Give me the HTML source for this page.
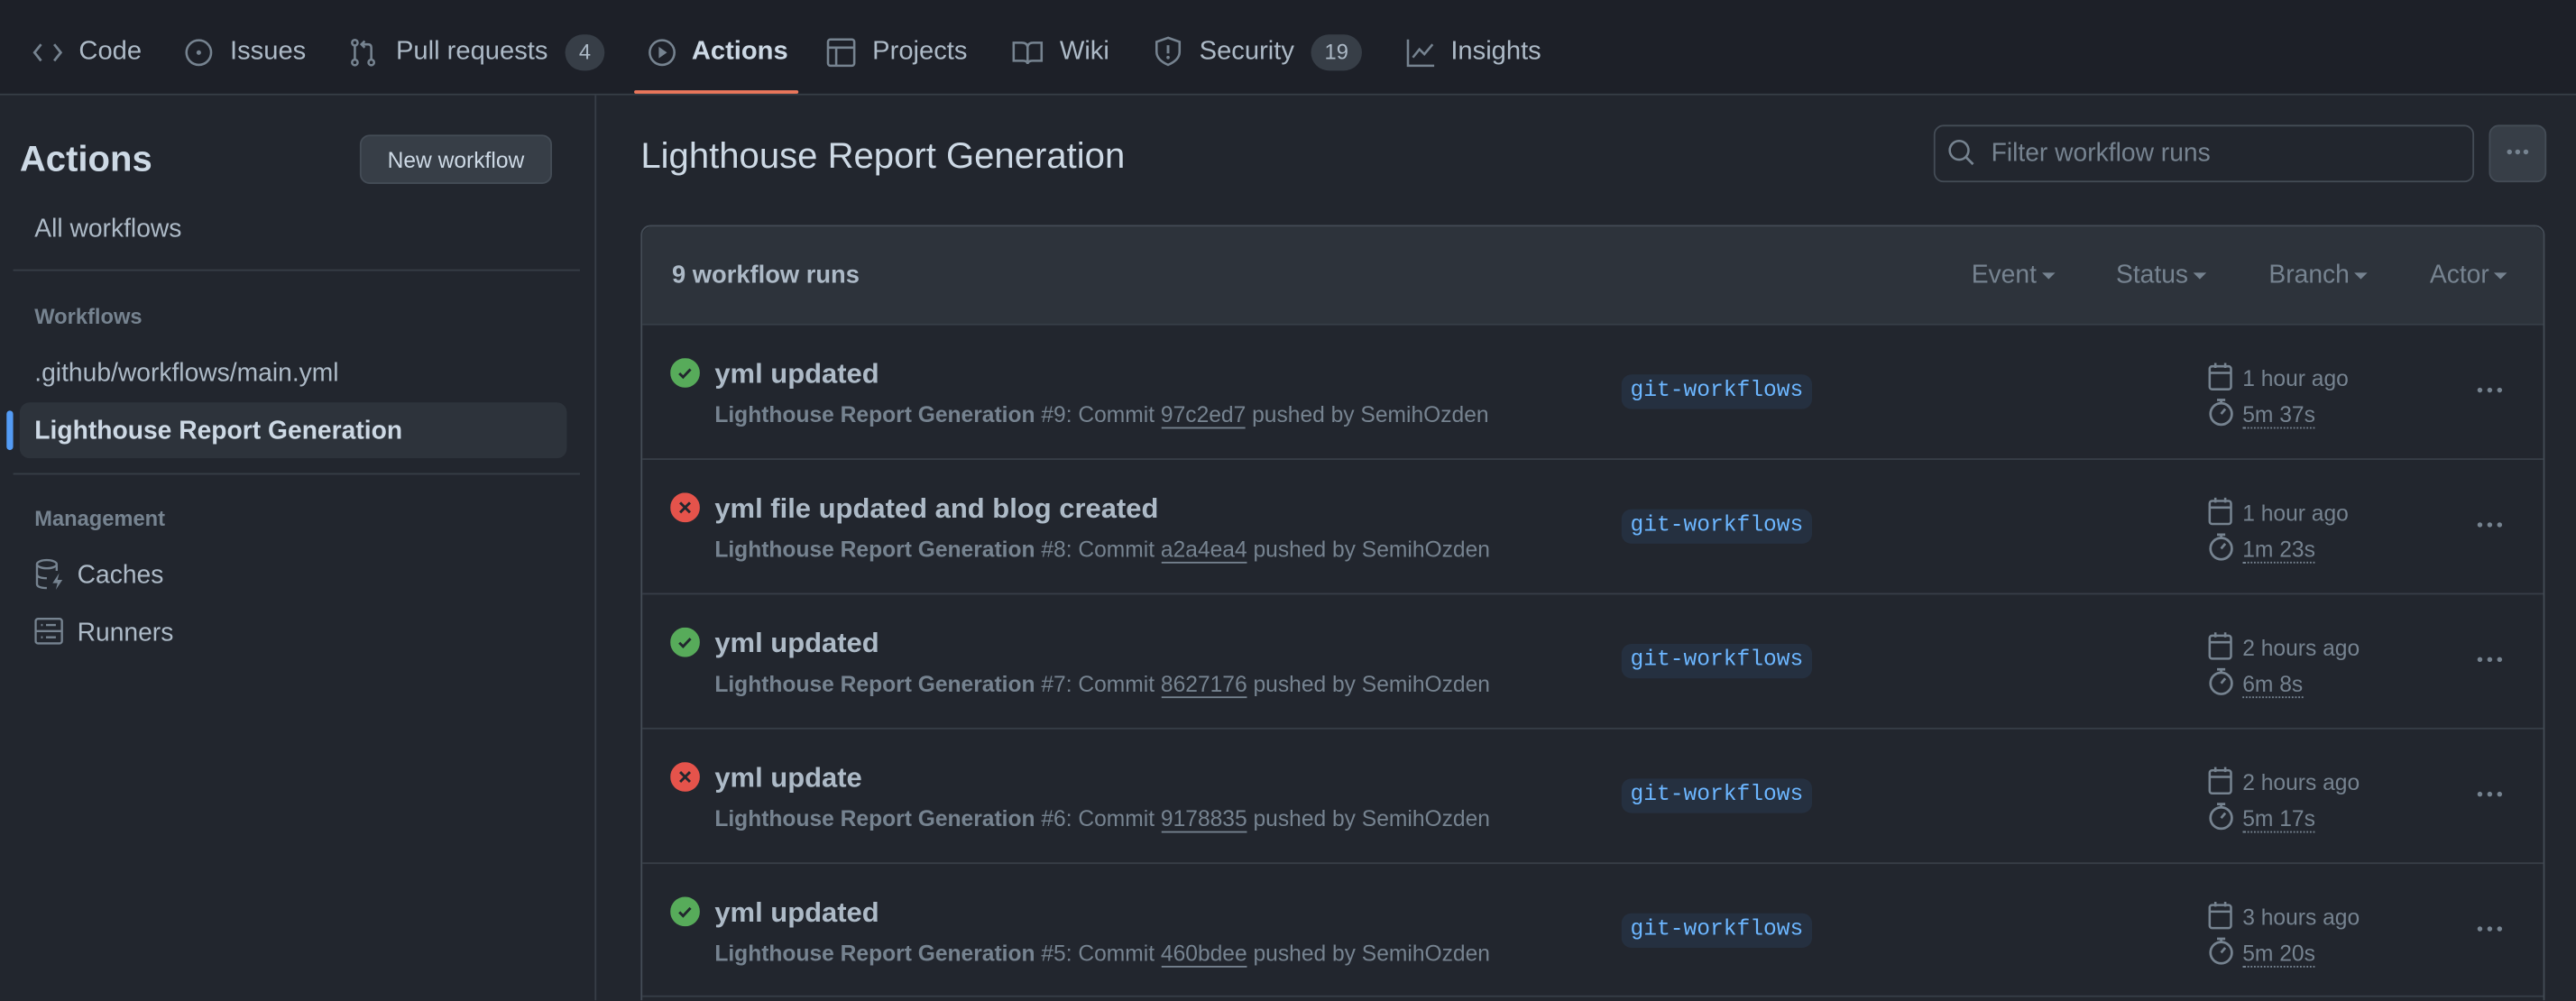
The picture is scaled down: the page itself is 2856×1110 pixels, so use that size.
<!DOCTYPE html>
<html><head><meta charset="utf-8"><style>
html,body{margin:0;padding:0;background:#22262e;overflow:hidden;width:2856px;height:1110px}
#w{position:absolute;left:0;top:0;width:1568px;height:609px;overflow:hidden;transform:scale(1.82143);transform-origin:0 0;font-family:"Liberation Sans",sans-serif;color:#adbac7;background:#22262e}
.a{position:absolute;white-space:nowrap}
svg{position:absolute}
.nav{position:absolute;left:0;top:0;width:1568px;height:57px;background:#1d2028;border-bottom:1px solid #373e47}
.nt{font-size:16px;top:23px;color:#adbac7}
.cnt{position:absolute;top:21px;height:22px;border-radius:11px;background:#373e47;font-size:13px;text-align:center;line-height:22px;color:#adbac7}
.row{position:absolute;left:391px;width:1157px;height:81px;border-top:1px solid #373e47}
.t{font-size:17px;font-weight:bold;color:#adbac7}
.s{font-size:13.5px;color:#768390}
.tag{position:absolute;left:596px;top:30px;width:116px;height:21px;border-radius:6px;background:#253040;color:#6cb6ff;font-family:"Liberation Mono","DejaVu Sans Mono",monospace;font-size:13.5px;line-height:21px;text-align:center}
.u{border-bottom:1px solid #768390}
.d{border-bottom:1px dotted #768390}
.car{display:inline-block;width:0;height:0;border-left:4px solid transparent;border-right:4px solid transparent;border-top:4px solid #768390;vertical-align:middle;margin-left:3px}
.keb{position:absolute;left:1117px;top:38px}
.keb i{position:absolute;top:0;width:3px;height:3px;border-radius:50%;background:#768390}
</style></head><body><div id="w">
<div class="nav"></div>
<svg style="left:20px;top:24px" width="18" height="16"><path d="M5 3L1 8l4 5M13 3l4 5-4 5" stroke="#768390" fill="none" stroke-width="1.5"/></svg>
<div class="a nt" style="left:48px">Code</div>
<svg style="left:112px;top:23px" width="18" height="18"><circle cx="9" cy="9" r="7.5" stroke="#768390" fill="none" stroke-width="1.4"/><circle cx="9" cy="9" r="1.4" fill="#768390"/></svg>
<div class="a nt" style="left:140px">Issues</div>
<svg style="left:212px;top:23px" width="18" height="18"><g stroke="#768390" fill="none" stroke-width="1.4"><circle cx="4" cy="3" r="1.7"/><circle cx="4" cy="15" r="1.7"/><circle cx="14" cy="15" r="1.7"/><path d="M4 5v8M14 13V6q0-2-2-2H8M10 2L8 4l2 2"/></g></svg>
<div class="a nt" style="left:241px">Pull requests</div>
<div class="cnt" style="left:344px;width:24px">4</div>
<svg style="left:394px;top:23px" width="18" height="18"><circle cx="9" cy="9" r="7.5" stroke="#768390" fill="none" stroke-width="1.4"/><path d="M7 5.5v7l5-3.5z" fill="#768390"/></svg>
<div class="a nt" style="left:421px;font-weight:bold;color:#cdd9e5">Actions</div>
<div class="a" style="left:386px;top:55px;width:100px;height:2px;background:#ec775c;border-radius:1px"></div>
<svg style="left:503px;top:23px" width="18" height="18"><g stroke="#768390" fill="none" stroke-width="1.4"><rect x="1" y="1" width="16" height="16" rx="1.5"/><path d="M1 6h16M6 6v11"/></g></svg>
<div class="a nt" style="left:531px">Projects</div>
<svg style="left:616px;top:24px" width="19" height="16"><path d="M1 2h5q3 0 3.5 2.5Q10 2 13 2h5v11h-5.5q-3 0-3 2q0-2-3-2H1z M9.5 4.5V14" stroke="#768390" fill="none" stroke-width="1.4"/></svg>
<div class="a nt" style="left:645px">Wiki</div>
<svg style="left:702px;top:22px" width="18" height="19"><path d="M9 1L2 3.5v6q0 5 7 8q7-3 7-8v-6z" stroke="#768390" fill="none" stroke-width="1.4"/><path d="M9 5.5v5" stroke="#768390" stroke-width="1.6"/><circle cx="9" cy="13" r="1" fill="#768390"/></svg>
<div class="a nt" style="left:730px">Security</div>
<div class="cnt" style="left:798px;width:31px">19</div>
<svg style="left:856px;top:23px" width="18" height="18"><path d="M1 1v16h16M4 12l4-5 3 3 5-6" stroke="#768390" fill="none" stroke-width="1.4"/></svg>
<div class="a nt" style="left:883px">Insights</div>

<div class="a" style="left:362px;top:58px;width:1px;height:560px;background:#373e47"></div>
<div class="a" style="left:12px;top:84px;font-size:22px;font-weight:bold;color:#cdd9e5">Actions</div>
<div class="a" style="left:219px;top:82px;width:115px;height:28px;border:1px solid #444c56;border-radius:6px;background:#373e47;font-size:13.5px;text-align:center;line-height:29px;color:#cdd9e5">New workflow</div>
<div class="a" style="left:21px;top:131px;font-size:15.5px">All workflows</div>
<div class="a" style="left:8px;top:164px;width:345px;height:1px;background:#373e47"></div>
<div class="a" style="left:21px;top:185px;font-size:13px;font-weight:bold;color:#768390">Workflows</div>
<div class="a" style="left:21px;top:219px;font-size:15.5px">.github/workflows/main.yml</div>
<div class="a" style="left:12px;top:245px;width:333px;height:34px;background:#2d333b;border-radius:6px"></div>
<div class="a" style="left:4px;top:250px;width:4px;height:24px;background:#539bf5;border-radius:2px"></div>
<div class="a" style="left:21px;top:254px;font-size:15.5px;font-weight:bold;color:#cdd9e5">Lighthouse Report Generation</div>
<div class="a" style="left:8px;top:288px;width:345px;height:1px;background:#373e47"></div>
<div class="a" style="left:21px;top:308px;font-size:13px;font-weight:bold;color:#768390">Management</div>
<svg style="left:21px;top:340px" width="20" height="20"><g stroke="#768390" fill="none" stroke-width="1.3"><ellipse cx="7.5" cy="3.5" rx="6" ry="2.5"/><path d="M1.5 3.5v12q0 2.5 6 2.5M1.5 9.5q0 2.5 6 2.5M13.5 3.5v4"/></g><path d="M15 9l-4 6h3l-1 4 4-6h-3z" fill="#768390"/></svg>
<div class="a" style="left:47px;top:342px;font-size:15.5px">Caches</div>
<svg style="left:21px;top:376px" width="18" height="17"><g stroke="#768390" fill="none" stroke-width="1.3"><rect x="0.7" y="0.7" width="16" height="15" rx="1.5"/><path d="M0.7 8.2h16M4 4.5h1M7 4.5h6M4 12h1M7 12h6"/></g></svg>
<div class="a" style="left:47px;top:377px;font-size:15.5px">Runners</div>

<div class="a" style="left:390px;top:82px;font-size:22px;color:#cdd9e5">Lighthouse Report Generation</div>
<div class="a" style="left:1177px;top:76px;width:327px;height:33px;border:1px solid #444c56;border-radius:6px;background:#22262e"></div>
<svg style="left:1185px;top:84px" width="18" height="18"><circle cx="7.5" cy="7.5" r="5.7" stroke="#768390" fill="none" stroke-width="1.4"/><path d="M11.5 11.5l4.5 4.5" stroke="#768390" stroke-width="1.5"/></svg>
<div class="a" style="left:1212px;top:85px;font-size:15.5px;color:#768390">Filter workflow runs</div>
<div class="a" style="left:1515px;top:76px;width:33px;height:33px;border:1px solid #444c56;border-radius:6px;background:#373e47"></div>
<div class="keb" style="left:1526px;top:91px"><i style="left:0"></i><i style="left:5px"></i><i style="left:10px"></i></div>

<div class="a" style="left:390px;top:137px;width:1157px;height:500px;border:1px solid #444c56;border-radius:6px"></div>
<div class="a" style="left:391px;top:138px;width:1157px;height:59px;background:#2d333b;border-radius:6px 6px 0 0"></div>
<div class="a" style="left:409px;top:159px;font-size:15px;font-weight:bold;color:#adbac7">9 workflow runs</div>
<div class="a" style="left:1200px;top:159px;font-size:15.5px;color:#768390">Event<span class="car"></span></div>
<div class="a" style="left:1288px;top:159px;font-size:15.5px;color:#768390">Status<span class="car"></span></div>
<div class="a" style="left:1381px;top:159px;font-size:15.5px;color:#768390">Branch<span class="car"></span></div>
<div class="a" style="left:1479px;top:159px;font-size:15.5px;color:#768390">Actor<span class="car"></span></div>

<div class="row" style="top:197px">
<svg style="left:17px;top:20px" width="18" height="18"><circle cx="9" cy="9" r="9" fill="#57ab5a"/><path d="M5.5 9.3l2.3 2.3 4.5-4.8" stroke="#22272e" fill="none" stroke-width="1.6"/></svg>
<div class="a t" style="left:44px;top:20px">yml updated</div>
<div class="a s" style="left:44px;top:47px"><b>Lighthouse Report Generation</b> #9: Commit <span class="u">97c2ed7</span> pushed by SemihOzden</div>
<div class="tag">git-workflows</div>
<svg style="left:953px;top:22px" width="16" height="18"><rect x="1" y="3" width="13" height="14" rx="1.5" stroke="#768390" fill="none" stroke-width="1.4"/><path d="M1 7h13M4.5 1v3M10.5 1v3" stroke="#768390" stroke-width="1.4"/></svg>
<div class="a s" style="left:974px;top:25px">1 hour ago</div>
<svg style="left:953px;top:44px" width="16" height="18"><circle cx="8" cy="10" r="6.5" stroke="#768390" fill="none" stroke-width="1.5"/><path d="M5.5 1.5h5M8 1.5v2M8 10l2.5-3" stroke="#768390" stroke-width="1.5"/></svg>
<div class="a s" style="left:974px;top:47px"><span class="d">5m 37s</span></div>
<div class="keb"><i style="left:0"></i><i style="left:6px"></i><i style="left:12px"></i></div>
</div>
<div class="row" style="top:279px">
<svg style="left:17px;top:20px" width="18" height="18"><circle cx="9" cy="9" r="9" fill="#e5534b"/><path d="M6 6l6 6M12 6l-6 6" stroke="#22272e" stroke-width="1.6"/></svg>
<div class="a t" style="left:44px;top:20px">yml file updated and blog created</div>
<div class="a s" style="left:44px;top:47px"><b>Lighthouse Report Generation</b> #8: Commit <span class="u">a2a4ea4</span> pushed by SemihOzden</div>
<div class="tag">git-workflows</div>
<svg style="left:953px;top:22px" width="16" height="18"><rect x="1" y="3" width="13" height="14" rx="1.5" stroke="#768390" fill="none" stroke-width="1.4"/><path d="M1 7h13M4.5 1v3M10.5 1v3" stroke="#768390" stroke-width="1.4"/></svg>
<div class="a s" style="left:974px;top:25px">1 hour ago</div>
<svg style="left:953px;top:44px" width="16" height="18"><circle cx="8" cy="10" r="6.5" stroke="#768390" fill="none" stroke-width="1.5"/><path d="M5.5 1.5h5M8 1.5v2M8 10l2.5-3" stroke="#768390" stroke-width="1.5"/></svg>
<div class="a s" style="left:974px;top:47px"><span class="d">1m 23s</span></div>
<div class="keb"><i style="left:0"></i><i style="left:6px"></i><i style="left:12px"></i></div>
</div>
<div class="row" style="top:361px">
<svg style="left:17px;top:20px" width="18" height="18"><circle cx="9" cy="9" r="9" fill="#57ab5a"/><path d="M5.5 9.3l2.3 2.3 4.5-4.8" stroke="#22272e" fill="none" stroke-width="1.6"/></svg>
<div class="a t" style="left:44px;top:20px">yml updated</div>
<div class="a s" style="left:44px;top:47px"><b>Lighthouse Report Generation</b> #7: Commit <span class="u">8627176</span> pushed by SemihOzden</div>
<div class="tag">git-workflows</div>
<svg style="left:953px;top:22px" width="16" height="18"><rect x="1" y="3" width="13" height="14" rx="1.5" stroke="#768390" fill="none" stroke-width="1.4"/><path d="M1 7h13M4.5 1v3M10.5 1v3" stroke="#768390" stroke-width="1.4"/></svg>
<div class="a s" style="left:974px;top:25px">2 hours ago</div>
<svg style="left:953px;top:44px" width="16" height="18"><circle cx="8" cy="10" r="6.5" stroke="#768390" fill="none" stroke-width="1.5"/><path d="M5.5 1.5h5M8 1.5v2M8 10l2.5-3" stroke="#768390" stroke-width="1.5"/></svg>
<div class="a s" style="left:974px;top:47px"><span class="d">6m 8s</span></div>
<div class="keb"><i style="left:0"></i><i style="left:6px"></i><i style="left:12px"></i></div>
</div>
<div class="row" style="top:443px">
<svg style="left:17px;top:20px" width="18" height="18"><circle cx="9" cy="9" r="9" fill="#e5534b"/><path d="M6 6l6 6M12 6l-6 6" stroke="#22272e" stroke-width="1.6"/></svg>
<div class="a t" style="left:44px;top:20px">yml update</div>
<div class="a s" style="left:44px;top:47px"><b>Lighthouse Report Generation</b> #6: Commit <span class="u">9178835</span> pushed by SemihOzden</div>
<div class="tag">git-workflows</div>
<svg style="left:953px;top:22px" width="16" height="18"><rect x="1" y="3" width="13" height="14" rx="1.5" stroke="#768390" fill="none" stroke-width="1.4"/><path d="M1 7h13M4.5 1v3M10.5 1v3" stroke="#768390" stroke-width="1.4"/></svg>
<div class="a s" style="left:974px;top:25px">2 hours ago</div>
<svg style="left:953px;top:44px" width="16" height="18"><circle cx="8" cy="10" r="6.5" stroke="#768390" fill="none" stroke-width="1.5"/><path d="M5.5 1.5h5M8 1.5v2M8 10l2.5-3" stroke="#768390" stroke-width="1.5"/></svg>
<div class="a s" style="left:974px;top:47px"><span class="d">5m 17s</span></div>
<div class="keb"><i style="left:0"></i><i style="left:6px"></i><i style="left:12px"></i></div>
</div>
<div class="row" style="top:525px">
<svg style="left:17px;top:20px" width="18" height="18"><circle cx="9" cy="9" r="9" fill="#57ab5a"/><path d="M5.5 9.3l2.3 2.3 4.5-4.8" stroke="#22272e" fill="none" stroke-width="1.6"/></svg>
<div class="a t" style="left:44px;top:20px">yml updated</div>
<div class="a s" style="left:44px;top:47px"><b>Lighthouse Report Generation</b> #5: Commit <span class="u">460bdee</span> pushed by SemihOzden</div>
<div class="tag">git-workflows</div>
<svg style="left:953px;top:22px" width="16" height="18"><rect x="1" y="3" width="13" height="14" rx="1.5" stroke="#768390" fill="none" stroke-width="1.4"/><path d="M1 7h13M4.5 1v3M10.5 1v3" stroke="#768390" stroke-width="1.4"/></svg>
<div class="a s" style="left:974px;top:25px">3 hours ago</div>
<svg style="left:953px;top:44px" width="16" height="18"><circle cx="8" cy="10" r="6.5" stroke="#768390" fill="none" stroke-width="1.5"/><path d="M5.5 1.5h5M8 1.5v2M8 10l2.5-3" stroke="#768390" stroke-width="1.5"/></svg>
<div class="a s" style="left:974px;top:47px"><span class="d">5m 20s</span></div>
<div class="keb"><i style="left:0"></i><i style="left:6px"></i><i style="left:12px"></i></div>
</div>
<div class="row" style="top:606px;height:10px"></div>
</div></body></html>
